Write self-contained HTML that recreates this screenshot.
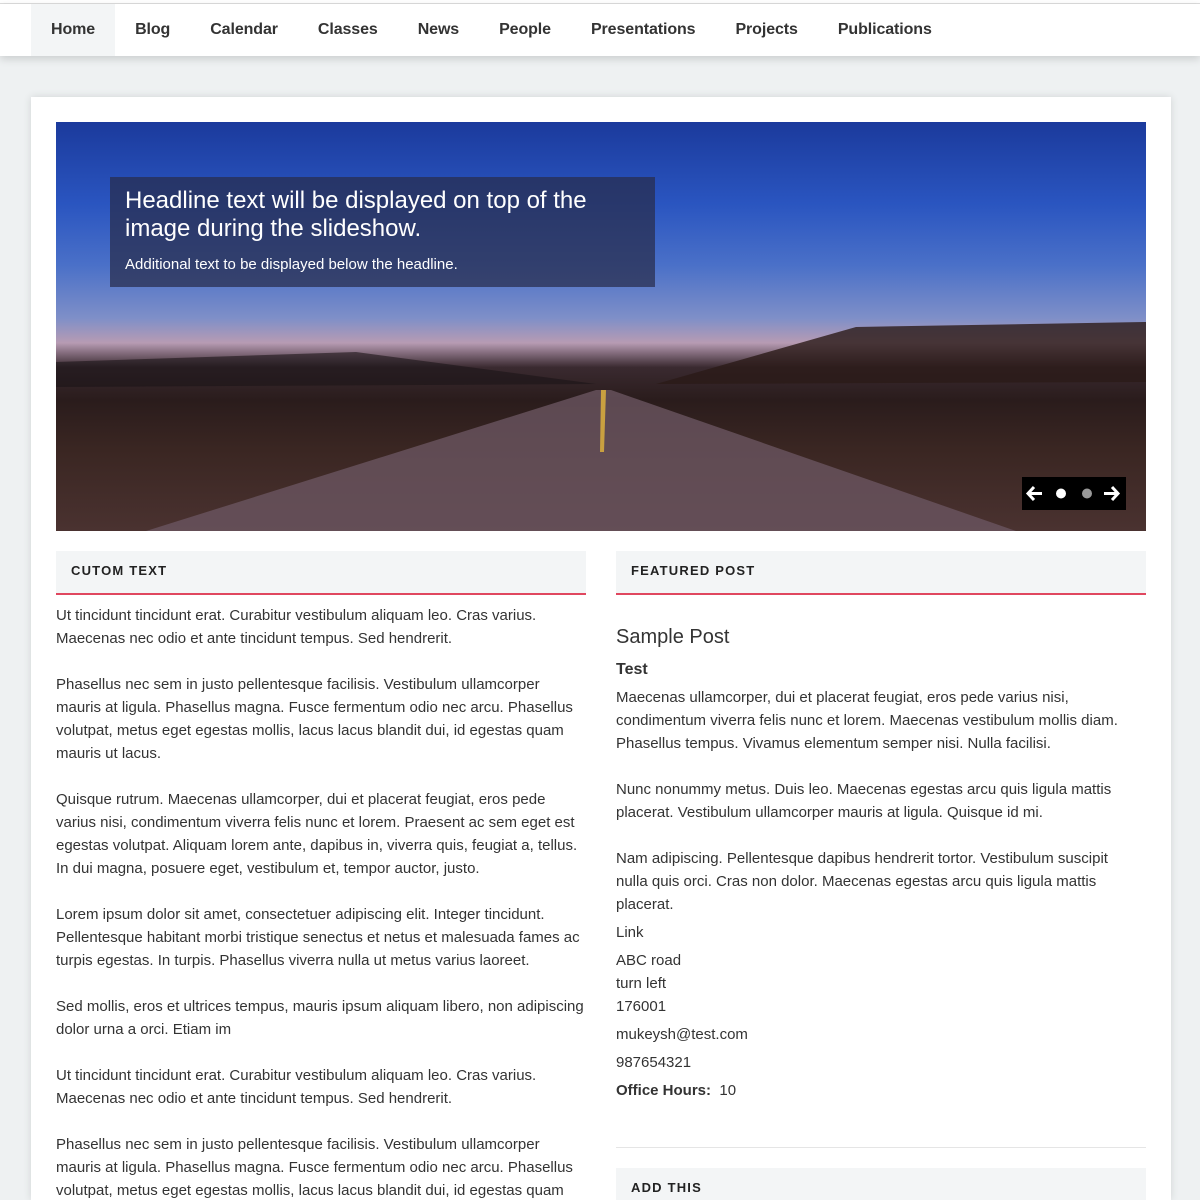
<!DOCTYPE html>
<html><head><style>
*{margin:0;padding:0;box-sizing:border-box}
html,body{width:1200px;height:1200px;overflow:hidden}
body{background:#eef1f2;font-family:"Liberation Sans",sans-serif;color:#333;position:relative}
.top{position:absolute;top:0;left:0;width:1200px;height:4px;background:#fff;border-bottom:1px solid #ddd}
nav{position:absolute;top:4px;left:0;width:1200px;height:52px;background:#fff;box-shadow:0 3px 8px rgba(0,0,0,.15);padding-left:31px;display:flex}
nav a{display:block;height:52px;line-height:51px;padding:0 20px;font-weight:bold;font-size:16px;color:#333;text-decoration:none;letter-spacing:-0.1px}
nav a.on{background:#f3f5f6}
.card{position:absolute;left:31px;top:97px;width:1140px;height:1103px;background:#fff;box-shadow:0 0 8px rgba(0,0,0,.12)}
.hero{position:absolute;left:56px;top:122px;width:1090px;height:409px;overflow:hidden;
background:linear-gradient(180deg,#1b3a9c 0%,#2a55c0 20%,#4a70c8 35%,#7f8fc8 48%,#b79bb3 54%,#3a2a30 60%,#2a1c1c 68%,#3a2622 80%,#4a3230 100%)}
.road{position:absolute;left:0;top:0;width:1090px;height:409px}
.cap{position:absolute;left:110px;top:177px;width:545px;height:110px;background:rgba(40,45,75,.72);color:#fff;padding:10px 15px}
.cap h2{font-weight:normal;font-size:24px;line-height:28px}
.cap p{font-size:15px;margin-top:13px}
.ctl{position:absolute;left:1022px;top:477px;width:104px;height:33px;background:#000}
.hd{position:absolute;height:44px;background:#f3f5f6;border-bottom:2px solid #e0475f;font-size:13px;font-weight:bold;letter-spacing:1.2px;padding:12px 15px;color:#222}
.tx{position:absolute;font-size:15px;line-height:23px;color:#333}
.tx p{margin-bottom:23px}
</style></head><body>
<div class="top"></div>
<nav><a class="on">Home</a><a>Blog</a><a>Calendar</a><a>Classes</a><a>News</a><a>People</a><a>Presentations</a><a>Projects</a><a>Publications</a></nav>
<div class="card"></div>
<div class="hero">
<svg class="road" viewBox="0 0 1090 409"><polygon points="540,268 555,268 960,409 90,409" fill="#6a5560" opacity=".8"/><polygon points="545,268 550,268 548,330 544,330" fill="#c9a040"/><polygon points="0,240 300,230 540,262 0,265" fill="#1a1418" opacity=".6"/><polygon points="600,262 800,205 1090,200 1090,260" fill="#2a1a18" opacity=".8"/></svg>
</div>
<div class="cap"><h2>Headline text will be displayed on top of the image during the slideshow.</h2><p>Additional text to be displayed below the headline.</p></div>
<div class="ctl"><svg width="104" height="33"><path d="M6 16.5h14M12 10l-6 6.5 6 6.5" stroke="#fff" stroke-width="3" fill="none"/><circle cx="39" cy="16.5" r="5" fill="#fff"/><circle cx="65" cy="16.5" r="5" fill="#999"/><path d="M82 16.5h14M90 10l6 6.5-6 6.5" stroke="#fff" stroke-width="3" fill="none"/></svg></div>
<div class="hd" style="left:56px;top:551px;width:530px">CUTOM TEXT</div>
<div class="hd" style="left:616px;top:551px;width:530px">FEATURED POST</div>
<div class="tx" style="left:56px;top:604px;width:530px">
<p>Ut tincidunt tincidunt erat. Curabitur vestibulum aliquam leo. Cras varius. Maecenas nec odio et ante tincidunt tempus. Sed hendrerit.</p>
<p>Phasellus nec sem in justo pellentesque facilisis. Vestibulum ullamcorper mauris at ligula. Phasellus magna. Fusce fermentum odio nec arcu. Phasellus volutpat, metus eget egestas mollis, lacus lacus blandit dui, id egestas quam mauris ut lacus.</p>
<p>Quisque rutrum. Maecenas ullamcorper, dui et placerat feugiat, eros pede varius nisi, condimentum viverra felis nunc et lorem. Praesent ac sem eget est egestas volutpat. Aliquam lorem ante, dapibus in, viverra quis, feugiat a, tellus. In dui magna, posuere eget, vestibulum et, tempor auctor, justo.</p>
<p>Lorem ipsum dolor sit amet, consectetuer adipiscing elit. Integer tincidunt. Pellentesque habitant morbi tristique senectus et netus et malesuada fames ac turpis egestas. In turpis. Phasellus viverra nulla ut metus varius laoreet.</p>
<p>Sed mollis, eros et ultrices tempus, mauris ipsum aliquam libero, non adipiscing dolor urna a orci. Etiam im</p>
<p>Ut tincidunt tincidunt erat. Curabitur vestibulum aliquam leo. Cras varius. Maecenas nec odio et ante tincidunt tempus. Sed hendrerit.</p>
<p>Phasellus nec sem in justo pellentesque facilisis. Vestibulum ullamcorper mauris at ligula. Phasellus magna. Fusce fermentum odio nec arcu. Phasellus volutpat, metus eget egestas mollis, lacus lacus blandit dui, id egestas quam</p>
</div>
<div class="tx" style="left:616px;top:624px;width:515px">
<div style="font-size:20px;line-height:26px;margin-bottom:8px">Sample Post</div>
<div style="font-weight:bold;font-size:16px;margin-bottom:5px">Test</div>
<p>Maecenas ullamcorper, dui et placerat feugiat, eros pede varius nisi, condimentum viverra felis nunc et lorem. Maecenas vestibulum mollis diam. Phasellus tempus. Vivamus elementum semper nisi. Nulla facilisi.</p>
<p>Nunc nonummy metus. Duis leo. Maecenas egestas arcu quis ligula mattis placerat. Vestibulum ullamcorper mauris at ligula. Quisque id mi.</p>
<p style="margin-bottom:5px">Nam adipiscing. Pellentesque dapibus hendrerit tortor. Vestibulum suscipit nulla quis orci. Cras non dolor. Maecenas egestas arcu quis ligula mattis placerat.</p>
<div style="margin-bottom:5px">Link</div>
<div style="margin-bottom:5px">ABC road<br>turn left<br>176001</div>
<div style="margin-bottom:5px">mukeysh@test.com</div>
<div style="margin-bottom:5px">987654321</div>
<div><b>Office Hours:</b>&nbsp; 10</div>
</div>
<div style="position:absolute;left:616px;top:1147px;width:530px;border-top:1px solid #e5e5e5"></div>
<div class="hd" style="left:616px;top:1168px;width:530px;border:0">ADD THIS</div>
</body></html>
